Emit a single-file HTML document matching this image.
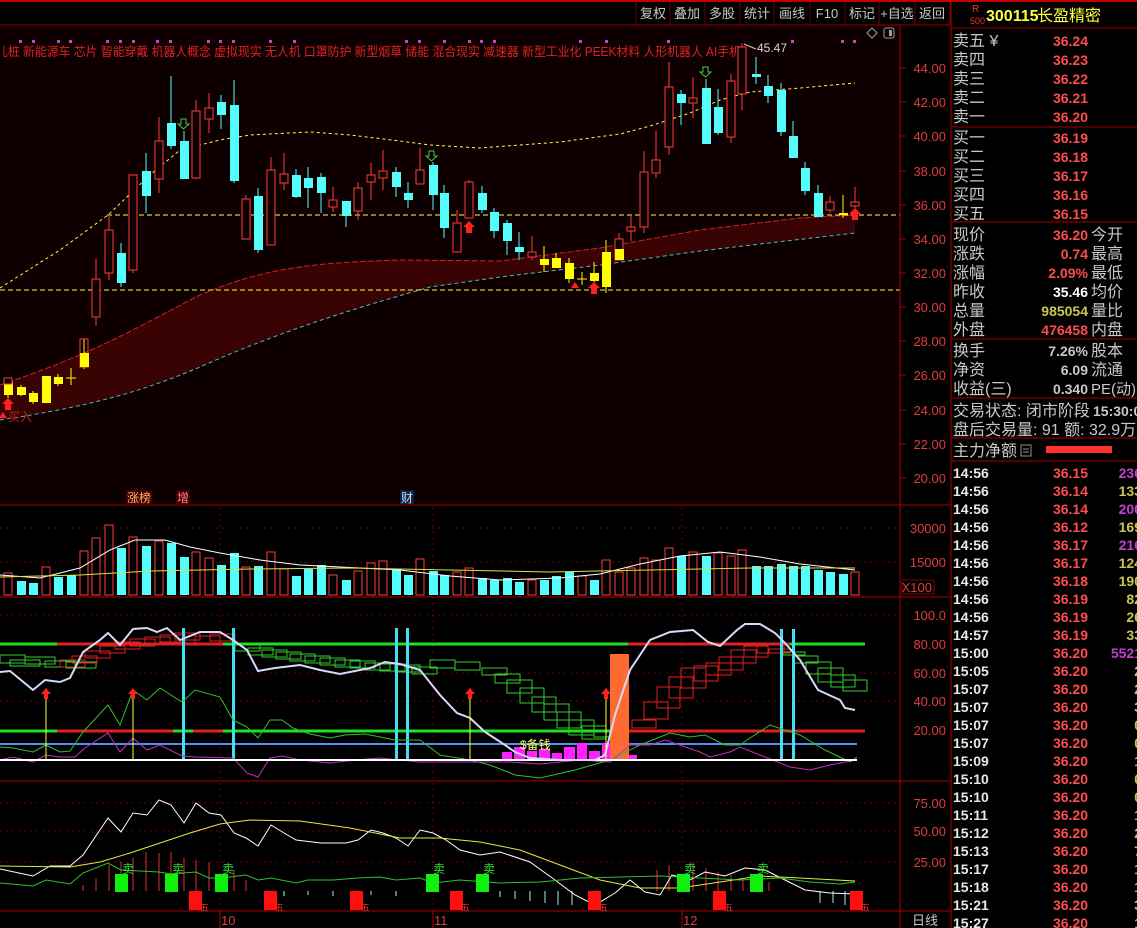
<!DOCTYPE html>
<html><head><meta charset="utf-8">
<style>
html,body{margin:0;padding:0;background:#000;width:1137px;height:928px;overflow:hidden}
svg{display:block}
text{font-family:"Liberation Sans","Noto Sans CJK SC",sans-serif}
.ax{fill:#e03c3c;font-size:13px;text-anchor:end}
.tb{fill:#c8c8c8;font-size:13px;text-anchor:middle}
.lb{fill:#c8c8c8;font-size:16px}
.pr{fill:#ff4c4c;font-size:14px;font-weight:bold;text-anchor:end}
.tm{fill:#e8e8e8;font-size:14px;font-weight:bold}
.vp{fill:#c040d0;font-size:14px;font-weight:bold;text-anchor:end}
.vy{fill:#c8c850;font-size:14px;font-weight:bold;text-anchor:end}
.rc{fill:none;stroke:#ff3c3c;stroke-width:1}
.cy{fill:#54fcfc}
.ye{fill:#ffff00}
</style></head><body>
<svg width="1137" height="928" viewBox="0 0 1137 928" xmlns="http://www.w3.org/2000/svg">
<rect x="0" y="0" width="1137" height="2" fill="#c00000"/>
<line x1="0" y1="25" x2="951" y2="25" stroke="#a00000"/>
<g stroke="#700000">
<line x1="636" y1="2" x2="636" y2="25"/><line x1="670" y1="2" x2="670" y2="25"/><line x1="705" y1="2" x2="705" y2="25"/><line x1="740" y1="2" x2="740" y2="25"/><line x1="774" y1="2" x2="774" y2="25"/><line x1="810" y1="2" x2="810" y2="25"/><line x1="845" y1="2" x2="845" y2="25"/><line x1="879" y1="2" x2="879" y2="25"/><line x1="915" y1="2" x2="915" y2="25"/><line x1="950" y1="2" x2="950" y2="25"/>
</g>
<text class="tb" x="653" y="18">复权</text><text class="tb" x="687" y="18">叠加</text><text class="tb" x="722" y="18">多股</text><text class="tb" x="757" y="18">统计</text><text class="tb" x="792" y="18">画线</text><text class="tb" x="827" y="18">F10</text><text class="tb" x="862" y="18">标记</text><text class="tb" x="897" y="18">+自选</text><text class="tb" x="932" y="18">返回</text>

<rect x="0" y="26" width="900" height="478" fill="#0e0000"/>
<g fill="#d040d0">
<rect x="19" y="40" width="3" height="3"/><rect x="32" y="40" width="3" height="3"/><rect x="57" y="40" width="3" height="3"/><rect x="69" y="40" width="3" height="3"/><rect x="106" y="40" width="3" height="3"/><rect x="119" y="40" width="3" height="3"/><rect x="132" y="40" width="3" height="3"/><rect x="156" y="40" width="3" height="3"/><rect x="169" y="40" width="3" height="3"/><rect x="207" y="40" width="3" height="3"/><rect x="219" y="40" width="3" height="3"/><rect x="232" y="40" width="3" height="3"/><rect x="269" y="40" width="3" height="3"/><rect x="293" y="40" width="3" height="3"/><rect x="405" y="40" width="3" height="3"/><rect x="418" y="40" width="3" height="3"/><rect x="443" y="40" width="3" height="3"/><rect x="468" y="40" width="3" height="3"/><rect x="480" y="40" width="3" height="3"/><rect x="493" y="40" width="3" height="3"/><rect x="579" y="40" width="3" height="3"/><rect x="605" y="40" width="3" height="3"/><rect x="667" y="40" width="3" height="3"/><rect x="791" y="40" width="3" height="3"/><rect x="841" y="40" width="3" height="3"/><rect x="853" y="40" width="3" height="3"/>
</g>
<text x="-4" y="56" fill="#e02020" font-size="12.5" textLength="745" lengthAdjust="spacingAndGlyphs">儿桩 新能源车 芯片 智能穿戴 机器人概念 虚拟现实 无人机 口罩防护 新型烟草 储能 混合现实 减速器 新型工业化 PEEK材料 人形机器人 AI手机</text>
<text x="757" y="52" fill="#d8d8d8" font-size="12">45.47</text>
<path d="M744 44 L756 49" stroke="#c8c8c8" fill="none"/>
<path d="M872 28 L877 33 L872 38 L867 33 Z" fill="none" stroke="#a0a0a0"/>
<rect x="884" y="28" width="10" height="10" rx="2" fill="none" stroke="#a0a0a0"/><rect x="889" y="30" width="3" height="6" fill="#a0a0a0"/>

<path d="M0 385 C100 352 150 320 200 295 C260 270 300 263 400 260 L500 261 L600 248 L700 230 L800 218 L855 215 L855 233 L700 251 L600 265 L500 277 L430 287 C400 296 300 322 200 367 C150 388 100 405 0 420 Z" fill="#3a0303"/>
<path d="M0 385 C100 352 150 320 200 295 C260 270 300 263 400 260 L500 261 L600 248 L700 230 L800 218 L855 215" fill="none" stroke="#d02020" stroke-dasharray="6 2"/>
<path d="M0 420 C100 405 150 388 200 367 C300 322 400 296 430 287 L500 277 L600 265 L700 251 L855 233" fill="none" stroke="#40c0c0" stroke-dasharray="4 3"/>
<line x1="0" y1="290" x2="900" y2="290" stroke="#ffff40" stroke-dasharray="5 3"/>
<line x1="107" y1="215" x2="900" y2="215" stroke="#ffff40" stroke-dasharray="5 3"/>
<path d="M0 288 L60 250 L108 215 L150 175 L180 150 L220 140 L250 135 L310 132 L350 135 L400 141 L430 145 L480 148 L560 142 L620 134 L650 126 L690 113 L720 100 L750 92 L800 88 L855 83" fill="none" stroke="#ffff40" stroke-dasharray="3 3"/>

<g stroke-width="1">
<g stroke="#ffff00"><line x1="8" y1="378" x2="8" y2="398"/><line x1="21" y1="385" x2="21" y2="396"/><line x1="33" y1="391" x2="33" y2="404"/><line x1="58" y1="374" x2="58" y2="386"/><line x1="71" y1="368" x2="71" y2="385"/><line x1="66" y1="378" x2="76" y2="378"/><line x1="84" y1="339" x2="84" y2="369"/><line x1="544" y1="246" x2="544" y2="272"/><line x1="556" y1="253" x2="556" y2="268"/><line x1="569" y1="258" x2="569" y2="283"/><line x1="582" y1="272" x2="582" y2="285"/><line x1="577" y1="279" x2="587" y2="279"/><line x1="594" y1="262" x2="594" y2="283"/><line x1="606" y1="240" x2="606" y2="293"/><line x1="843" y1="195" x2="843" y2="218"/></g>
<rect class="ye" x="4" y="382" width="9" height="13"/><rect class="ye" x="17" y="387" width="9" height="8"/><rect class="ye" x="29" y="393" width="9" height="9"/><rect class="ye" x="42" y="376" width="9" height="27"/><rect class="ye" x="54" y="377" width="9" height="7"/>
<rect class="rc" x="80" y="339" width="8" height="28"/><rect class="ye" x="80" y="353" width="9" height="14"/>
<rect class="ye" x="540" y="259" width="9" height="6"/><rect class="ye" x="552" y="258" width="9" height="10"/><rect class="ye" x="565" y="263" width="9" height="16"/><rect class="ye" x="590" y="273" width="9" height="8"/><rect class="ye" x="602" y="252" width="9" height="35"/><rect class="ye" x="839" y="213" width="9" height="2"/>
<g stroke="#ff3c3c">
<line x1="96" y1="259" x2="96" y2="326"/><line x1="109" y1="215" x2="109" y2="280"/><line x1="133" y1="175" x2="133" y2="273"/><line x1="159" y1="117" x2="159" y2="193"/><line x1="196" y1="100" x2="196" y2="179"/><line x1="209" y1="93" x2="209" y2="133"/><line x1="246" y1="195" x2="246" y2="239"/><line x1="271" y1="157" x2="271" y2="245"/><line x1="284" y1="153" x2="284" y2="190"/><line x1="333" y1="187" x2="333" y2="212"/><line x1="358" y1="182" x2="358" y2="220"/><line x1="371" y1="163" x2="371" y2="200"/><line x1="383" y1="150" x2="383" y2="190"/><line x1="420" y1="148" x2="420" y2="184"/><line x1="457" y1="210" x2="457" y2="252"/><line x1="469" y1="180" x2="469" y2="218"/><line x1="532" y1="236" x2="532" y2="260"/><line x1="619" y1="233" x2="619" y2="260"/><line x1="631" y1="216" x2="631" y2="241"/><line x1="644" y1="151" x2="644" y2="233"/><line x1="656" y1="131" x2="656" y2="178"/><line x1="669" y1="62" x2="669" y2="155"/><line x1="693" y1="77" x2="693" y2="118"/><line x1="731" y1="74" x2="731" y2="143"/><line x1="742" y1="43" x2="742" y2="110"/><line x1="830" y1="196" x2="830" y2="213"/><line x1="855" y1="187" x2="855" y2="212"/>
</g>
<g fill="#0e0000" stroke="#ff3c3c">
<rect x="92" y="279" width="8" height="38"/><rect x="105" y="230" width="8" height="43"/><rect x="129" y="175" width="8" height="95"/><rect x="155" y="141" width="8" height="38"/><rect x="192" y="111" width="8" height="67"/><rect x="205" y="108" width="8" height="11"/><rect x="242" y="199" width="8" height="40"/><rect x="267" y="170" width="8" height="75"/><rect x="280" y="174" width="8" height="9"/><rect x="329" y="200" width="8" height="7"/><rect x="354" y="188" width="8" height="23"/><rect x="367" y="175" width="8" height="7"/><rect x="379" y="171" width="8" height="7"/><rect x="416" y="170" width="8" height="14"/><rect x="453" y="223" width="8" height="29"/><rect x="465" y="182" width="8" height="36"/><rect x="528" y="252" width="8" height="5"/><rect x="615" y="239" width="8" height="21"/><rect x="627" y="227" width="8" height="4"/><rect x="640" y="172" width="8" height="55"/><rect x="652" y="160" width="8" height="13"/><rect x="665" y="87" width="8" height="60"/><rect x="689" y="98" width="8" height="5"/><rect x="727" y="81" width="8" height="56"/><rect x="738" y="47" width="8" height="47"/><rect x="826" y="202" width="8" height="8"/><rect x="851" y="202" width="8" height="4"/>
<rect x="4" y="378" width="8" height="6"/>
</g>
<rect class="ye" x="615" y="249" width="9" height="11"/>
<g stroke="#54fcfc">
<line x1="121" y1="243" x2="121" y2="287"/><line x1="146" y1="153" x2="146" y2="213"/><line x1="171" y1="76" x2="171" y2="149"/><line x1="184" y1="131" x2="184" y2="179"/><line x1="221" y1="95" x2="221" y2="129"/><line x1="234" y1="80" x2="234" y2="183"/><line x1="258" y1="188" x2="258" y2="253"/><line x1="296" y1="169" x2="296" y2="198"/><line x1="308" y1="167" x2="308" y2="208"/><line x1="321" y1="173" x2="321" y2="213"/><line x1="346" y1="201" x2="346" y2="227"/><line x1="396" y1="167" x2="396" y2="197"/><line x1="408" y1="182" x2="408" y2="208"/><line x1="433" y1="162" x2="433" y2="210"/><line x1="444" y1="185" x2="444" y2="238"/><line x1="482" y1="186" x2="482" y2="213"/><line x1="494" y1="208" x2="494" y2="238"/><line x1="507" y1="220" x2="507" y2="255"/><line x1="519" y1="232" x2="519" y2="260"/><line x1="681" y1="90" x2="681" y2="125"/><line x1="706" y1="79" x2="706" y2="144"/><line x1="718" y1="89" x2="718" y2="135"/><line x1="756" y1="57" x2="756" y2="84"/><line x1="768" y1="75" x2="768" y2="103"/><line x1="781" y1="83" x2="781" y2="136"/><line x1="793" y1="121" x2="793" y2="158"/><line x1="805" y1="162" x2="805" y2="195"/><line x1="818" y1="185" x2="818" y2="217"/>
</g>
<g class="cy">
<rect x="117" y="253" width="9" height="30"/><rect x="142" y="171" width="9" height="25"/><rect x="167" y="123" width="9" height="23"/><rect x="180" y="141" width="9" height="38"/><rect x="217" y="102" width="9" height="13"/><rect x="230" y="105" width="9" height="76"/><rect x="254" y="196" width="9" height="54"/><rect x="292" y="175" width="9" height="22"/><rect x="304" y="178" width="9" height="10"/><rect x="317" y="177" width="9" height="16"/><rect x="342" y="201" width="9" height="15"/><rect x="392" y="172" width="9" height="15"/><rect x="404" y="193" width="9" height="7"/><rect x="429" y="165" width="9" height="30"/><rect x="440" y="193" width="9" height="35"/><rect x="478" y="193" width="9" height="17"/><rect x="490" y="212" width="9" height="19"/><rect x="503" y="223" width="9" height="18"/><rect x="515" y="247" width="9" height="5"/><rect x="677" y="94" width="9" height="9"/><rect x="702" y="88" width="9" height="56"/><rect x="714" y="107" width="9" height="26"/><rect x="752" y="74" width="9" height="3"/><rect x="764" y="86" width="9" height="10"/><rect x="777" y="90" width="9" height="42"/><rect x="789" y="136" width="9" height="22"/><rect x="801" y="168" width="9" height="23"/><rect x="814" y="193" width="9" height="24"/>
</g>
</g>
<g fill="none" stroke="#40d040"><path d="M181 119 h5 v5 h3 l-5.5 5 l-5.5 -5 h3 z"/><path d="M429 151 h5 v5 h3 l-5.5 5 l-5.5 -5 h3 z"/><path d="M703 67 h5 v5 h3 l-5.5 5 l-5.5 -5 h3 z"/></g>
<g fill="#ff2020"><path d="M8 398 l6 6 h-3 v6 h-6 v-6 h-3 z"/><path d="M469 221 l6 6 h-3 v6 h-6 v-6 h-3 z"/><path d="M594 282 l6 6 h-3 v6 h-6 v-6 h-3 z"/><path d="M855 208 l6 6 h-3 v6 h-6 v-6 h-3 z"/><path d="M575 282 l4 6 h-8 z"/><path d="M3 412 l4 6 h-8 z"/></g>
<text x="8" y="421" fill="#c02020" font-size="12">买入</text>
<rect x="126" y="490" width="26" height="14" fill="#400000"/><text x="127" y="502" fill="#ffb060" font-size="12">涨榜</text>
<rect x="176" y="490" width="14" height="14" fill="#400000"/><text x="177" y="502" fill="#ff8080" font-size="12">增</text>
<rect x="400" y="490" width="14" height="14" fill="#102040"/><text x="401" y="502" fill="#c0e0ff" font-size="12">财</text>

<g stroke="#b00000">
<line x1="0" y1="505" x2="951" y2="505"/><line x1="0" y1="597" x2="951" y2="597"/><line x1="0" y1="781" x2="951" y2="781"/><line x1="0" y1="911" x2="951" y2="911"/>
<line x1="900" y1="26" x2="900" y2="928"/><line x1="951" y1="0" x2="951" y2="928"/>
</g>
<g stroke="#b00000"><line x1="900" y1="68" x2="906" y2="68"/><line x1="900" y1="102" x2="906" y2="102"/><line x1="900" y1="136" x2="906" y2="136"/><line x1="900" y1="171" x2="906" y2="171"/><line x1="900" y1="205" x2="906" y2="205"/><line x1="900" y1="239" x2="906" y2="239"/><line x1="900" y1="273" x2="906" y2="273"/><line x1="900" y1="307" x2="906" y2="307"/><line x1="900" y1="341" x2="906" y2="341"/><line x1="900" y1="375" x2="906" y2="375"/><line x1="900" y1="410" x2="906" y2="410"/><line x1="900" y1="444" x2="906" y2="444"/><line x1="900" y1="478" x2="906" y2="478"/></g>
<text class="ax" x="946" y="73">44.00</text><text class="ax" x="946" y="107">42.00</text><text class="ax" x="946" y="141">40.00</text><text class="ax" x="946" y="176">38.00</text><text class="ax" x="946" y="210">36.00</text><text class="ax" x="946" y="244">34.00</text><text class="ax" x="946" y="278">32.00</text><text class="ax" x="946" y="312">30.00</text><text class="ax" x="946" y="346">28.00</text><text class="ax" x="946" y="380">26.00</text><text class="ax" x="946" y="415">24.00</text><text class="ax" x="946" y="449">22.00</text><text class="ax" x="946" y="483">20.00</text>
<text class="ax" x="946" y="533">30000</text><text class="ax" x="946" y="567">15000</text>
<rect x="902" y="580" width="32" height="14" fill="none" stroke="#800000"/><text class="ax" x="932" y="592" font-size="12">X100</text>
<text class="ax" x="946" y="620">100.0</text><text class="ax" x="946" y="649">80.00</text><text class="ax" x="946" y="678">60.00</text><text class="ax" x="946" y="706">40.00</text><text class="ax" x="946" y="735">20.00</text>
<text class="ax" x="946" y="808">75.00</text><text class="ax" x="946" y="836">50.00</text><text class="ax" x="946" y="867">25.00</text>
<text x="912" y="925" fill="#c8c8c8" font-size="13">日线</text>

<g stroke="#700000" stroke-dasharray="2 4">
<line x1="0" y1="528" x2="900" y2="528"/><line x1="0" y1="562" x2="900" y2="562"/>
<line x1="0" y1="615" x2="900" y2="615"/><line x1="0" y1="673" x2="900" y2="673"/><line x1="0" y1="701" x2="900" y2="701"/>
<line x1="0" y1="803" x2="900" y2="803"/><line x1="0" y1="831" x2="900" y2="831"/><line x1="0" y1="862" x2="900" y2="862"/>
<line x1="220" y1="507" x2="220" y2="911"/><line x1="433" y1="507" x2="433" y2="911"/><line x1="682" y1="507" x2="682" y2="911"/>
</g>

<g fill="#000" stroke="#ff3c3c">
<rect x="4" y="573" width="8" height="22"/><rect x="42" y="567" width="8" height="28"/><rect x="80" y="551" width="8" height="44"/><rect x="92" y="538" width="8" height="57"/><rect x="105" y="525" width="8" height="70"/><rect x="129" y="537" width="8" height="58"/><rect x="155" y="541" width="8" height="54"/><rect x="192" y="552" width="8" height="43"/><rect x="205" y="558" width="8" height="37"/><rect x="242" y="567" width="8" height="28"/><rect x="267" y="552" width="8" height="43"/><rect x="280" y="569" width="8" height="26"/><rect x="329" y="575" width="8" height="20"/><rect x="354" y="571" width="8" height="24"/><rect x="367" y="563" width="8" height="32"/><rect x="379" y="561" width="8" height="34"/><rect x="416" y="559" width="8" height="36"/><rect x="453" y="572" width="8" height="23"/><rect x="465" y="568" width="8" height="27"/><rect x="528" y="580" width="8" height="15"/><rect x="578" y="576" width="8" height="19"/><rect x="602" y="560" width="8" height="35"/><rect x="615" y="572" width="8" height="23"/><rect x="627" y="568" width="8" height="27"/><rect x="640" y="558" width="8" height="37"/><rect x="652" y="560" width="8" height="35"/><rect x="665" y="548" width="8" height="47"/><rect x="689" y="552" width="8" height="43"/><rect x="714" y="553" width="8" height="42"/><rect x="727" y="556" width="8" height="39"/><rect x="738" y="550" width="8" height="45"/><rect x="851" y="572" width="8" height="23"/>
</g>
<g class="cy">
<rect x="17" y="581" width="9" height="14"/><rect x="29" y="583" width="9" height="12"/><rect x="54" y="577" width="9" height="18"/><rect x="67" y="575" width="9" height="20"/><rect x="117" y="548" width="9" height="47"/><rect x="142" y="546" width="9" height="49"/><rect x="167" y="543" width="9" height="52"/><rect x="180" y="557" width="9" height="38"/><rect x="217" y="565" width="9" height="30"/><rect x="230" y="553" width="9" height="42"/><rect x="254" y="566" width="9" height="29"/><rect x="292" y="576" width="9" height="19"/><rect x="304" y="569" width="9" height="26"/><rect x="317" y="565" width="9" height="30"/><rect x="342" y="580" width="9" height="15"/><rect x="392" y="569" width="9" height="26"/><rect x="404" y="575" width="9" height="20"/><rect x="429" y="571" width="9" height="24"/><rect x="440" y="575" width="9" height="20"/><rect x="478" y="578" width="9" height="17"/><rect x="490" y="580" width="9" height="15"/><rect x="503" y="578" width="9" height="17"/><rect x="515" y="582" width="9" height="13"/><rect x="540" y="580" width="9" height="15"/><rect x="552" y="576" width="9" height="19"/><rect x="565" y="572" width="9" height="23"/><rect x="590" y="580" width="9" height="15"/><rect x="677" y="556" width="9" height="39"/><rect x="702" y="556" width="9" height="39"/><rect x="752" y="566" width="9" height="29"/><rect x="764" y="566" width="9" height="29"/><rect x="777" y="564" width="9" height="31"/><rect x="789" y="566" width="9" height="29"/><rect x="801" y="566" width="9" height="29"/><rect x="814" y="570" width="9" height="25"/><rect x="826" y="572" width="9" height="23"/><rect x="839" y="574" width="9" height="21"/>
</g>
<polyline fill="none" stroke="#ffffff" points="0,575 40,578 80,568 110,550 135,540 165,540 190,547 220,553 260,560 300,565 360,568 400,570 450,576 500,580 560,578 600,574 640,564 680,556 720,552 760,557 800,564 855,570"/>
<polyline fill="none" stroke="#e0e040" points="0,577 80,575 150,571 250,569 350,568 450,570 550,572 650,570 750,568 855,568"/>

<g stroke-width="3">
<line x1="0" y1="644" x2="57" y2="644" stroke="#20e020"/><line x1="57" y1="644" x2="223" y2="644" stroke="#e02020"/><line x1="223" y1="644" x2="628" y2="644" stroke="#20e020"/><line x1="628" y1="644" x2="790" y2="644" stroke="#e02020"/><line x1="790" y1="644" x2="865" y2="644" stroke="#20e020"/>
<line x1="0" y1="731" x2="57" y2="731" stroke="#20e020"/><line x1="57" y1="731" x2="173" y2="731" stroke="#e02020"/><line x1="173" y1="731" x2="193" y2="731" stroke="#20e020"/><line x1="193" y1="731" x2="223" y2="731" stroke="#e02020"/><line x1="223" y1="731" x2="628" y2="731" stroke="#20e020"/><line x1="628" y1="731" x2="865" y2="731" stroke="#e02020"/>
</g>
<line x1="0" y1="744" x2="857" y2="744" stroke="#5090f0" stroke-width="2"/>
<g fill="none" stroke="#30d030">
<rect x="0" y="655" width="25" height="8"/><rect x="10" y="660" width="30" height="6"/><rect x="25" y="657" width="30" height="7"/><rect x="45" y="661" width="30" height="6"/><rect x="66" y="662" width="30" height="6"/><rect x="235" y="643" width="25" height="8"/><rect x="248" y="648" width="25" height="7"/><rect x="262" y="650" width="25" height="7"/><rect x="276" y="652" width="25" height="7"/><rect x="290" y="654" width="25" height="7"/><rect x="305" y="656" width="25" height="7"/><rect x="320" y="658" width="25" height="7"/><rect x="335" y="660" width="25" height="7"/><rect x="350" y="661" width="25" height="7"/><rect x="365" y="663" width="25" height="7"/><rect x="380" y="664" width="25" height="7"/><rect x="395" y="665" width="25" height="7"/><rect x="412" y="667" width="25" height="7"/><rect x="430" y="660" width="25" height="8"/><rect x="455" y="662" width="25" height="8"/>
<rect x="482" y="668" width="25" height="7"/><rect x="495" y="674" width="25" height="9"/><rect x="507" y="680" width="25" height="13"/><rect x="520" y="688" width="24" height="15"/><rect x="532" y="697" width="24" height="15"/><rect x="544" y="704" width="25" height="16"/><rect x="557" y="712" width="24" height="16"/><rect x="569" y="720" width="25" height="15"/><rect x="582" y="726" width="24" height="13"/><rect x="594" y="730" width="26" height="7"/>
<rect x="783" y="652" width="22" height="3"/><rect x="793" y="656" width="25" height="7"/><rect x="806" y="662" width="25" height="12"/><rect x="818" y="668" width="25" height="14"/><rect x="831" y="675" width="24" height="12"/><rect x="843" y="680" width="24" height="11"/>
</g>
<g fill="none" stroke="#e02020">
<rect x="60" y="660" width="25" height="7"/><rect x="72" y="656" width="25" height="7"/><rect x="85" y="651" width="25" height="7"/><rect x="100" y="646" width="25" height="7"/><rect x="115" y="642" width="25" height="7"/><rect x="130" y="639" width="25" height="7"/><rect x="145" y="637" width="25" height="7"/><rect x="160" y="635" width="25" height="7"/><rect x="175" y="633" width="25" height="7"/><rect x="195" y="636" width="25" height="7"/><rect x="210" y="634" width="25" height="7"/>
<rect x="632" y="720" width="24" height="8"/><rect x="644" y="702" width="24" height="17"/><rect x="657" y="687" width="23" height="21"/><rect x="669" y="677" width="24" height="21"/><rect x="681" y="668" width="25" height="20"/><rect x="694" y="666" width="24" height="15"/><rect x="706" y="663" width="25" height="12"/><rect x="719" y="657" width="24" height="13"/><rect x="731" y="650" width="25" height="13"/><rect x="744" y="646" width="24" height="11"/><rect x="757" y="645" width="27" height="8"/><rect x="769" y="649" width="21" height="4"/>
</g>
<g fill="#ff20ff">
<rect x="502" y="752" width="10" height="8"/><rect x="514" y="747" width="11" height="13"/><rect x="527" y="751" width="10" height="9"/><rect x="539" y="749" width="11" height="11"/><rect x="552" y="753" width="10" height="7"/><rect x="564" y="747" width="11" height="13"/><rect x="577" y="743" width="10" height="17"/><rect x="589" y="751" width="11" height="9"/><rect x="602" y="743" width="8" height="17"/><rect x="629" y="755" width="8" height="5"/>
</g>
<text x="520" y="749" fill="#ffff60" font-size="12">$备钱</text>
<rect x="610" y="654" width="19" height="106" fill="#ff6a30"/>
<g fill="#40e0f0"><rect x="182" y="628" width="3" height="131"/><rect x="232" y="628" width="3" height="131"/><rect x="395" y="628" width="3" height="131"/><rect x="406" y="628" width="3" height="131"/><rect x="780" y="629" width="3" height="130"/><rect x="792" y="629" width="3" height="130"/></g>
<polyline fill="none" stroke="#30c030" points="0,747 13,748 33,752 46,745 60,752 70,751 83,732 108,705 120,725 133,690 147,700 160,688 182,702 195,690 220,697 233,720 247,727 258,738 270,720 282,720 293,728 310,734 330,738 345,735 365,734 395,740 420,740 440,755 470,760 490,765 515,775 540,778 575,770 610,760 640,745 670,733 690,737 705,735 725,745 740,745 750,738 770,725 800,735 825,750 850,762 857,757"/>
<polyline fill="none" stroke="#c030c0" points="0,760 13,757 33,762 46,755 60,757 75,757 85,748 108,733 120,752 133,738 147,750 160,745 182,756 195,757 233,758 247,773 258,777 270,758 282,756 300,760 330,763 355,760 380,758 420,762 460,762 510,762 540,764 580,760 610,762 630,745 650,745 665,740 700,752 710,757 730,752 740,747 760,755 790,767 810,770 830,765 855,760"/>
<line x1="0" y1="760" x2="857" y2="760" stroke="#ffffff" stroke-width="2"/>
<polyline fill="none" stroke="#d8d8f8" stroke-width="2" points="0,672 10,671 33,690 45,680 60,682 70,678 83,652 100,640 108,633 120,645 133,629 147,628 157,632 167,628 180,640 200,632 220,632 233,640 247,650 258,671 275,668 300,665 320,670 340,674 370,668 385,662 400,664 420,670 440,695 457,713 470,718 485,732 505,745 515,752 530,758 560,760 595,760 605,755 615,715 630,670 650,640 670,632 693,630 708,642 720,646 737,630 745,624 760,624 775,633 785,643 800,660 818,690 840,700 845,708 855,710"/>
<g stroke="#ffff40"><line x1="46" y1="695" x2="46" y2="760"/><line x1="133" y1="695" x2="133" y2="760"/><line x1="470" y1="695" x2="470" y2="760"/><line x1="606" y1="695" x2="606" y2="760"/></g>
<g fill="#ff2020"><path d="M46 688 l5 6 h-3 v5 h-4 v-5 h-3 z"/><path d="M133 688 l5 6 h-3 v5 h-4 v-5 h-3 z"/><path d="M470 688 l5 6 h-3 v5 h-4 v-5 h-3 z"/><path d="M606 688 l5 6 h-3 v5 h-4 v-5 h-3 z"/></g>

<g stroke="#e03030"><line x1="83" y1="885" x2="83" y2="891"/><line x1="96" y1="878" x2="96" y2="891"/><line x1="109" y1="865" x2="109" y2="891"/><line x1="121" y1="862" x2="121" y2="891"/><line x1="133" y1="858" x2="133" y2="891"/><line x1="146" y1="852" x2="146" y2="891"/><line x1="159" y1="853" x2="159" y2="891"/><line x1="171" y1="852" x2="171" y2="891"/><line x1="184" y1="858" x2="184" y2="891"/><line x1="196" y1="860" x2="196" y2="891"/><line x1="209" y1="862" x2="209" y2="891"/><line x1="234" y1="870" x2="234" y2="891"/><line x1="246" y1="880" x2="246" y2="891"/><line x1="657" y1="870" x2="657" y2="891"/><line x1="669" y1="865" x2="669" y2="891"/><line x1="693" y1="862" x2="693" y2="891"/><line x1="706" y1="868" x2="706" y2="891"/><line x1="718" y1="872" x2="718" y2="891"/><line x1="731" y1="875" x2="731" y2="891"/><line x1="743" y1="880" x2="743" y2="891"/><line x1="769" y1="882" x2="769" y2="891"/></g>
<g stroke="#a0f0f0"><line x1="284" y1="891" x2="284" y2="896"/><line x1="308" y1="891" x2="308" y2="895"/><line x1="333" y1="891" x2="333" y2="896"/><line x1="371" y1="891" x2="371" y2="895"/><line x1="396" y1="891" x2="396" y2="896"/><line x1="500" y1="891" x2="500" y2="897"/><line x1="515" y1="891" x2="515" y2="899"/><line x1="530" y1="891" x2="530" y2="901"/><line x1="545" y1="891" x2="545" y2="903"/><line x1="558" y1="891" x2="558" y2="905"/><line x1="572" y1="891" x2="572" y2="905"/><line x1="820" y1="891" x2="820" y2="903"/><line x1="833" y1="891" x2="833" y2="903"/><line x1="845" y1="891" x2="845" y2="905"/></g>
<polyline fill="none" stroke="#ffffff" points="0,869 33,876 50,866 70,866 83,855 108,818 121,832 133,813 147,815 159,800 171,805 184,823 196,803 209,813 221,815 234,833 246,838 258,846 271,825 284,833 296,840 321,843 346,843 358,840 371,830 383,833 396,838 408,846 420,830 433,833 446,840 460,850 480,855 500,852 530,862 555,880 575,895 595,905 615,893 630,880 645,892 660,895 672,875 690,880 705,872 725,876 745,868 765,870 785,880 805,890 830,893 855,894"/>
<polyline fill="none" stroke="#e8e840" points="0,866 70,867 100,862 130,853 160,843 190,833 220,824 250,820 300,821 350,828 400,838 440,838 480,842 520,850 560,865 600,880 640,888 680,888 720,882 760,876 800,878 855,881"/>
<polyline fill="none" stroke="#30c030" points="0,883 33,886 46,880 70,884 83,873 108,863 121,870 159,872 171,874 196,872 209,878 221,878 246,875 258,880 271,878 296,883 308,880 333,880 358,878 380,877 396,880 420,878 433,883 460,880 500,883 540,882 580,878 620,877 660,876 700,878 740,880 780,878 810,882 840,884 855,882"/>
<g fill="#10f010"><rect x="115" y="874" width="13" height="18"/><rect x="165" y="874" width="13" height="18"/><rect x="215" y="874" width="13" height="18"/><rect x="426" y="874" width="13" height="18"/><rect x="476" y="874" width="13" height="18"/><rect x="677" y="874" width="13" height="18"/><rect x="750" y="874" width="13" height="18"/></g>
<g fill="#30e030" font-size="12"><text x="122" y="873">卖</text><text x="172" y="873">卖</text><text x="222" y="873">卖</text><text x="433" y="873">卖</text><text x="483" y="873">卖</text><text x="684" y="873">卖</text><text x="757" y="873">卖</text></g>
<g fill="#ff1010"><rect x="189" y="891" width="13" height="19"/><rect x="264" y="891" width="13" height="19"/><rect x="350" y="891" width="13" height="19"/><rect x="450" y="891" width="13" height="19"/><rect x="588" y="891" width="13" height="19"/><rect x="713" y="891" width="13" height="19"/><rect x="850" y="891" width="13" height="19"/></g>
<g fill="#ff3030" font-size="9"><text x="200" y="911">五</text><text x="275" y="911">五</text><text x="361" y="911">五</text><text x="461" y="911">五</text><text x="599" y="911">五</text><text x="724" y="911">五</text><text x="861" y="911">五</text></g>
<g fill="#e03c3c" font-size="13"><text x="221" y="925">10</text><text x="434" y="925">11</text><text x="683" y="925">12</text></g>
<g stroke="#b00000"><line x1="220" y1="911" x2="220" y2="928"/><line x1="433" y1="911" x2="433" y2="928"/><line x1="682" y1="911" x2="682" y2="928"/></g>

<g stroke="#a00000">
<line x1="951" y1="28" x2="1137" y2="28"/><line x1="951" y1="127" x2="1137" y2="127"/><line x1="951" y1="222" x2="1137" y2="222"/><line x1="951" y1="339" x2="1137" y2="339"/><line x1="951" y1="398" x2="1137" y2="398"/><line x1="951" y1="438" x2="1137" y2="438"/><line x1="951" y1="461" x2="1137" y2="461"/>
</g>
<text x="972" y="12" fill="#ff3030" font-size="10">R</text><text x="970" y="24" fill="#ff3030" font-size="9">500</text>
<text x="986" y="21" fill="#ffff40" font-size="16" font-weight="bold">300115</text><text x="1037" y="21" fill="#ffff40" font-size="16">长盈精密</text>
<g class="lb"><text x="953" y="46">卖五 ¥</text><text x="953" y="65">卖四</text><text x="953" y="84">卖三</text><text x="953" y="103">卖二</text><text x="953" y="122">卖一</text>
<text x="953" y="143">买一</text><text x="953" y="162">买二</text><text x="953" y="181">买三</text><text x="953" y="200">买四</text><text x="953" y="219">买五</text></g>
<g class="pr"><text x="1088" y="46">36.24</text><text x="1088" y="65">36.23</text><text x="1088" y="84">36.22</text><text x="1088" y="103">36.21</text><text x="1088" y="122">36.20</text><text x="1088" y="143">36.19</text><text x="1088" y="162">36.18</text><text x="1088" y="181">36.17</text><text x="1088" y="200">36.16</text><text x="1088" y="219">36.15</text></g>
<g class="lb"><text x="953" y="240">现价</text><text x="953" y="259">涨跌</text><text x="953" y="278">涨幅</text><text x="953" y="297">昨收</text><text x="953" y="316">总量</text><text x="953" y="335">外盘</text>
<text x="1091" y="240">今开</text><text x="1091" y="259">最高</text><text x="1091" y="278">最低</text><text x="1091" y="297">均价</text><text x="1091" y="316">量比</text><text x="1091" y="335">内盘</text>
<text x="953" y="356">换手</text><text x="953" y="375">净资</text><text x="953" y="394">收益(三)</text><text x="1091" y="356">股本</text><text x="1091" y="375">流通</text><text x="1091" y="394" font-size="15">PE(动)</text>
<text x="953" y="416">交易状态: 闭市阶段</text><text x="953" y="435">盘后交易量: 91  额: 32.9万</text><text x="953" y="456">主力净额</text></g>
<text x="1093" y="416" fill="#c8c8c8" font-size="14" font-weight="bold">15:30:0</text>
<g class="pr"><text x="1088" y="240">36.20</text><text x="1088" y="259">0.74</text><text x="1088" y="278">2.09%</text><text x="1088" y="297" fill="#ffffff">35.46</text><text x="1088" y="316" fill="#c8c850">985054</text><text x="1088" y="335">476458</text>
<text x="1088" y="356" fill="#c8c8c8">7.26%</text><text x="1088" y="375" fill="#c8c8c8">6.09</text><text x="1088" y="394" fill="#c8c8c8">0.340</text></g>
<rect x="1021" y="445" width="10" height="11" fill="none" stroke="#909090"/><line x1="1023" y1="449" x2="1029" y2="449" stroke="#909090"/><line x1="1023" y1="452" x2="1029" y2="452" stroke="#909090"/>
<rect x="1046" y="446" width="66" height="7" fill="#ff3030"/>
<g class="tm"><text x="953" y="478">14:56</text><text x="953" y="496">14:56</text><text x="953" y="514">14:56</text><text x="953" y="532">14:56</text><text x="953" y="550">14:56</text><text x="953" y="568">14:56</text><text x="953" y="586">14:56</text><text x="953" y="604">14:56</text><text x="953" y="622">14:56</text><text x="953" y="640">14:57</text><text x="953" y="658">15:00</text><text x="953" y="676">15:05</text><text x="953" y="694">15:07</text><text x="953" y="712">15:07</text><text x="953" y="730">15:07</text><text x="953" y="748">15:07</text><text x="953" y="766">15:09</text><text x="953" y="784">15:10</text><text x="953" y="802">15:10</text><text x="953" y="820">15:11</text><text x="953" y="838">15:12</text><text x="953" y="856">15:13</text><text x="953" y="874">15:17</text><text x="953" y="892">15:18</text><text x="953" y="910">15:21</text><text x="953" y="928">15:27</text></g>
<g class="pr"><text x="1088" y="478">36.15</text><text x="1088" y="496">36.14</text><text x="1088" y="514">36.14</text><text x="1088" y="532">36.12</text><text x="1088" y="550">36.17</text><text x="1088" y="568">36.17</text><text x="1088" y="586">36.18</text><text x="1088" y="604">36.19</text><text x="1088" y="622">36.19</text><text x="1088" y="640">36.19</text><text x="1088" y="658">36.20</text><text x="1088" y="676">36.20</text><text x="1088" y="694">36.20</text><text x="1088" y="712">36.20</text><text x="1088" y="730">36.20</text><text x="1088" y="748">36.20</text><text x="1088" y="766">36.20</text><text x="1088" y="784">36.20</text><text x="1088" y="802">36.20</text><text x="1088" y="820">36.20</text><text x="1088" y="838">36.20</text><text x="1088" y="856">36.20</text><text x="1088" y="874">36.20</text><text x="1088" y="892">36.20</text><text x="1088" y="910">36.20</text><text x="1088" y="928">36.20</text></g>
<g>
<text class="vp" x="1142" y="478">236</text><text class="vy" x="1142" y="496">133</text><text class="vp" x="1142" y="514">200</text><text class="vy" x="1142" y="532">169</text><text class="vp" x="1142" y="550">216</text><text class="vy" x="1142" y="568">124</text><text class="vy" x="1142" y="586">190</text><text class="vy" x="1142" y="604">82</text><text class="vy" x="1142" y="622">26</text><text class="vy" x="1142" y="640">33</text><text class="vp" x="1142" y="658">5521</text><text class="vy" x="1142" y="676">2</text><text class="vy" x="1142" y="694">2</text><text class="vy" x="1142" y="712">3</text><text class="vy" x="1142" y="730">0</text><text class="vy" x="1142" y="748">0</text><text class="vy" x="1142" y="766">1</text><text class="vy" x="1142" y="784">0</text><text class="vy" x="1142" y="802">0</text><text class="vy" x="1142" y="820">1</text><text class="vy" x="1142" y="838">2</text><text class="vy" x="1142" y="856">7</text><text class="vy" x="1142" y="874">1</text><text class="vy" x="1142" y="892">1</text><text class="vy" x="1142" y="910">3</text><text class="vy" x="1142" y="928">1</text>
</g>
</svg>
</body></html>
